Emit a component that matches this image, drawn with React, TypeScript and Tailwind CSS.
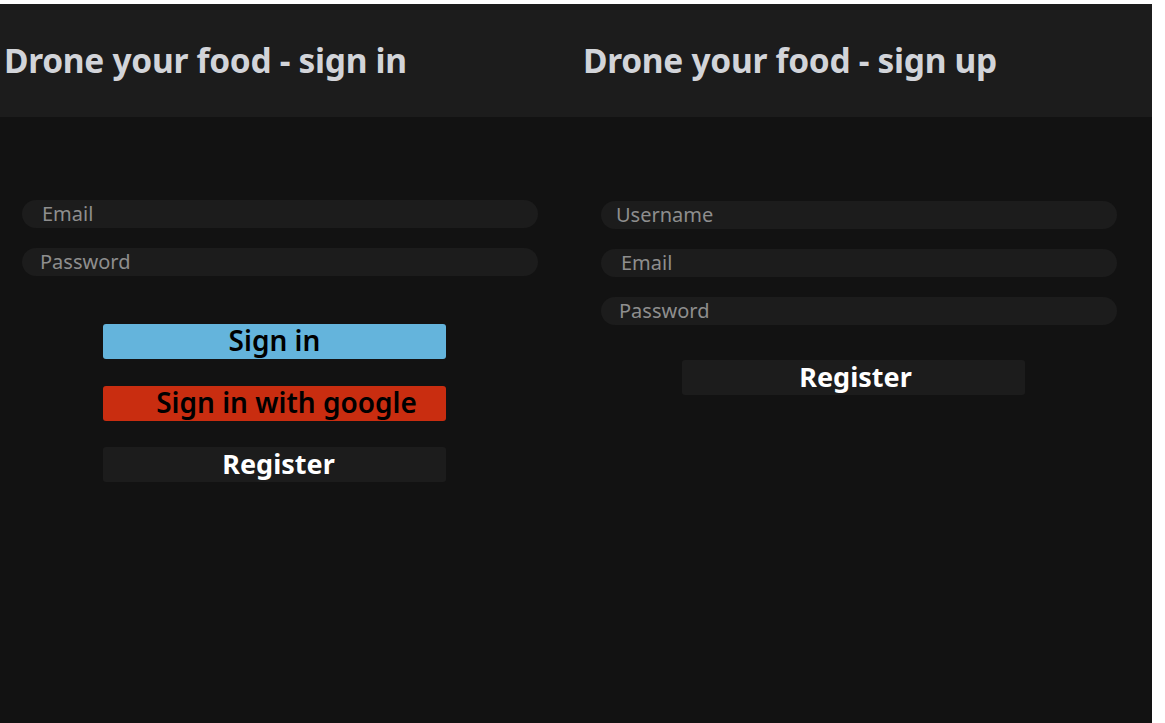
const font = { fontFamily: '"Noto Sans", "Open Sans", sans-serif' }

function Field({ placeholder, pad }: { placeholder: string; pad: string }) {
  return (
    <input
      className={`h-[28px] w-[516px] rounded-full bg-[#1c1c1c] text-[20px] text-white placeholder:text-[#8e8e8e] outline-none ${pad}`}
      placeholder={placeholder}
    />
  )
}

function Header({ title, pad }: { title: string; pad: string }) {
  return (
    <div className={`flex h-[113px] items-center bg-[#1c1c1c] ${pad}`}>
      <h1 className="text-[33.5px] font-bold tracking-[-0.3px] text-[#d2d4d9]">{title}</h1>
    </div>
  )
}

function Button({ label, className }: { label: string; className: string }) {
  return (
    <button className={`flex h-[35px] w-[343px] items-center justify-center rounded-[3px] pb-[3px] leading-none ${className}`}>
      {label}
    </button>
  )
}

export default function App() {
  return (
    <div className="h-[723px] w-[1165px] bg-white pt-[4px] pr-[13px]" style={font}>
      <div className="flex h-full bg-[#121212]">
        <div className="flex w-[576px] flex-col">
          <Header title="Drone your food - sign in" pad="pl-[4px]" />
          <div className="flex flex-col pt-[83px] pl-[22px]">
            <div className="flex flex-col gap-[20px]">
              <Field placeholder="Email" pad="pl-[20px]" />
              <Field placeholder="Password" pad="pl-[18px]" />
            </div>
            <div className="mt-[48px] ml-[81px] flex flex-col">
              <Button label="Sign in" className="bg-[#64b4dc] text-[28px] font-semibold text-black" />
              <Button label="Sign in with google" className="mt-[27px] bg-[#c92d10] pl-[24px] text-[28px] font-semibold text-black" />
              <Button label="Register" className="mt-[26px] bg-[#1c1c1c] pl-[8px] text-[27px] font-bold text-white" />
            </div>
          </div>
        </div>
        <div className="flex w-[576px] flex-col">
          <Header title="Drone your food - sign up" pad="pl-[7px]" />
          <div className="flex flex-col pt-[84px] pl-[25px]">
            <div className="flex flex-col gap-[20px]">
              <Field placeholder="Username" pad="pl-[15px]" />
              <Field placeholder="Email" pad="pl-[20px]" />
              <Field placeholder="Password" pad="pl-[18px]" />
            </div>
            <div className="mt-[35px] ml-[81px]">
              <Button label="Register" className="bg-[#1c1c1c] pl-[4px] text-[27px] font-bold text-white" />
            </div>
          </div>
        </div>
      </div>
    </div>
  )
}
